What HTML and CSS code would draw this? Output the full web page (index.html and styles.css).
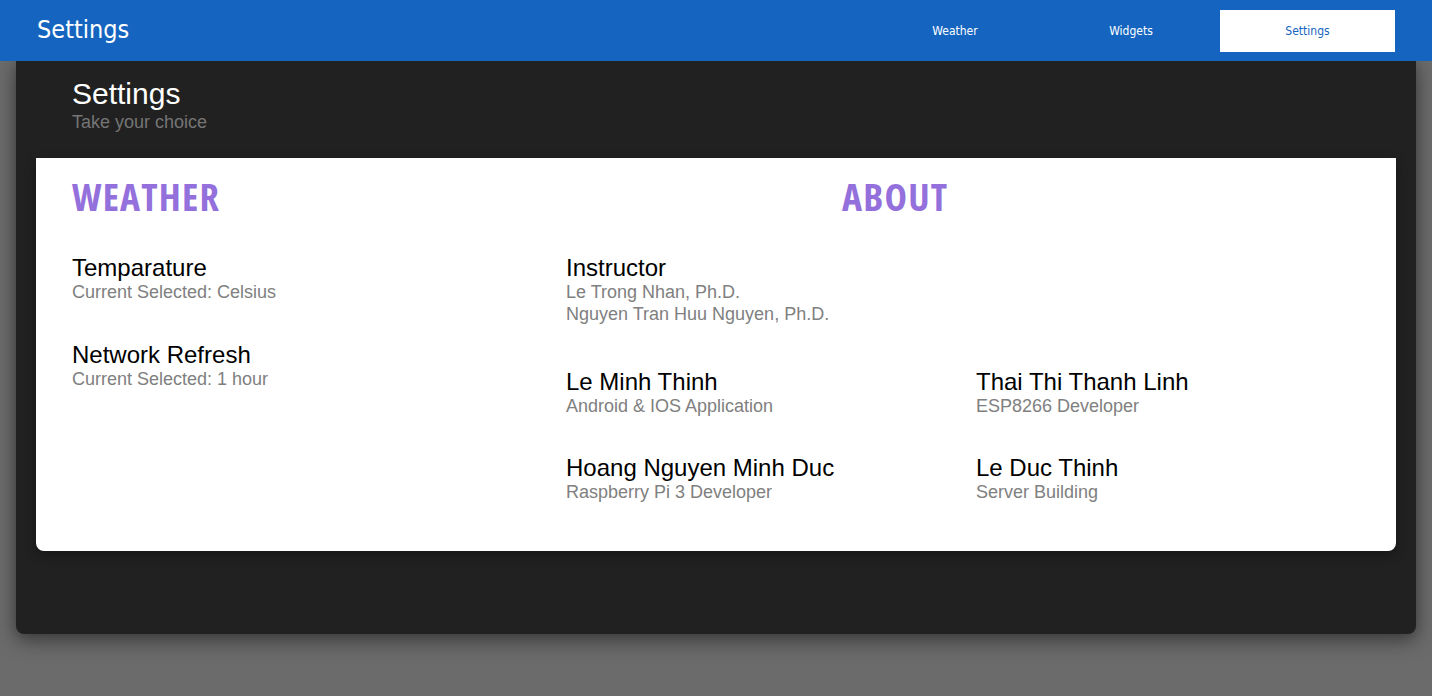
FILE: index.html
```html
<!DOCTYPE html>
<html>
<head>
<meta charset="utf-8">
<link rel="stylesheet" href="styles.css">
</head>
<body>
<header class="topbar">
  <div class="brand">Settings</div>
  <nav class="nav">
    <a class="nav-item">Weather</a>
    <a class="nav-item">Widgets</a>
    <a class="nav-item active">Settings</a>
  </nav>
</header>
<main class="panel">
  <div class="panel-head">
    <div class="panel-title">Settings</div>
    <div class="panel-sub">Take your choice</div>
  </div>
  <section class="card">
    <div class="col col-left">
      <h2 class="section-title">WEATHER</h2>
      <div class="stack">
        <div class="item">
          <div class="item-title">Temparature</div>
          <div class="item-sub">Current Selected: Celsius</div>
        </div>
        <div class="item">
          <div class="item-title">Network Refresh</div>
          <div class="item-sub">Current Selected: 1 hour</div>
        </div>
      </div>
    </div>
    <div class="col col-right">
      <h2 class="section-title about">ABOUT</h2>
      <div class="item instructor">
        <div class="item-title">Instructor</div>
        <div class="item-sub">Le Trong Nhan, Ph.D.</div>
        <div class="item-sub">Nguyen Tran Huu Nguyen, Ph.D.</div>
      </div>
      <div class="members">
        <div class="item">
          <div class="item-title">Le Minh Thinh</div>
          <div class="item-sub">Android &amp; IOS Application</div>
        </div>
        <div class="item">
          <div class="item-title">Thai Thi Thanh Linh</div>
          <div class="item-sub">ESP8266 Developer</div>
        </div>
        <div class="item">
          <div class="item-title">Hoang Nguyen Minh Duc</div>
          <div class="item-sub">Raspberry Pi 3 Developer</div>
        </div>
        <div class="item">
          <div class="item-title">Le Duc Thinh</div>
          <div class="item-sub">Server Building</div>
        </div>
      </div>
    </div>
  </section>
</main>
</body>
</html>
```
FILE: styles.css
```css
html, body {
  margin: 0;
  padding: 0;
}
body {
  background: #6b6b6b;
  font-family: "Liberation Sans", Arial, sans-serif;
  height: 696px;
  overflow: hidden;
}
.topbar {
  height: 61px;
  background: #1565c0;
  display: flex;
  align-items: center;
  padding: 0 37px;
  box-sizing: border-box;
  position: relative;
  z-index: 2;
}
.brand {
  flex: 1;
  color: #ffffff;
  font-family: "DejaVu Sans Condensed", "DejaVu Sans", sans-serif;
  font-stretch: condensed;
  font-size: 25px;
  line-height: 32px;
  padding-bottom: 2px;
}
.nav {
  display: flex;
  align-items: center;
}
.nav-item {
  width: 176px;
  height: 42px;
  display: flex;
  align-items: center;
  justify-content: center;
  color: #ffffff;
  font-family: "DejaVu Sans Condensed", "DejaVu Sans", sans-serif;
  font-stretch: condensed;
  font-size: 12px;
}
.nav-item.active {
  width: 175px;
  margin-left: 1px;
  background: #ffffff;
  color: #1565c0;
}
.panel {
  margin: 0 16px;
  height: 573px;
  background: #212121;
  border-radius: 0 0 8px 8px;
  box-shadow: 0 8px 20px rgba(0, 0, 0, 0.35), 0 0 14px rgba(0, 0, 0, 0.25);
  position: relative;
  z-index: 1;
}
.panel-head {
  padding: 16px 56px 0;
  height: 97px;
  box-sizing: border-box;
}
.panel-title {
  color: #ffffff;
  font-size: 30px;
  line-height: 34px;
}
.panel-sub {
  color: #757575;
  font-size: 18px;
  line-height: 22px;
}
.card {
  margin: 0 20px;
  height: 393px;
  background: #ffffff;
  border-radius: 0 0 8px 8px;
  box-shadow: 0 4px 12px rgba(0, 0, 0, 0.35);
  display: grid;
  grid-template-columns: 494px 1fr;
  box-sizing: border-box;
}
.col {
  padding-left: 36px;
  padding-top: 18px;
}
.section-title {
  margin: 0;
  color: #9370db;
  font-family: "Open Sans", "Lato", sans-serif;
  font-weight: 700;
  font-stretch: 75%;
  font-size: 38px;
  letter-spacing: 1.2px;
  line-height: 40px;
}
.section-title.about {
  padding-left: 276px;
}
.stack {
  margin-top: 38px;
  display: flex;
  flex-direction: column;
  gap: 38px;
}
.item-title {
  color: #000000;
  font-size: 24px;
  line-height: 27px;
}
.item-sub {
  color: #808080;
  font-size: 18px;
  line-height: 22px;
}
.instructor {
  margin-top: 38px;
}
.members {
  margin-top: 43px;
  display: grid;
  grid-template-columns: 410px 410px;
  row-gap: 37px;
}
```
